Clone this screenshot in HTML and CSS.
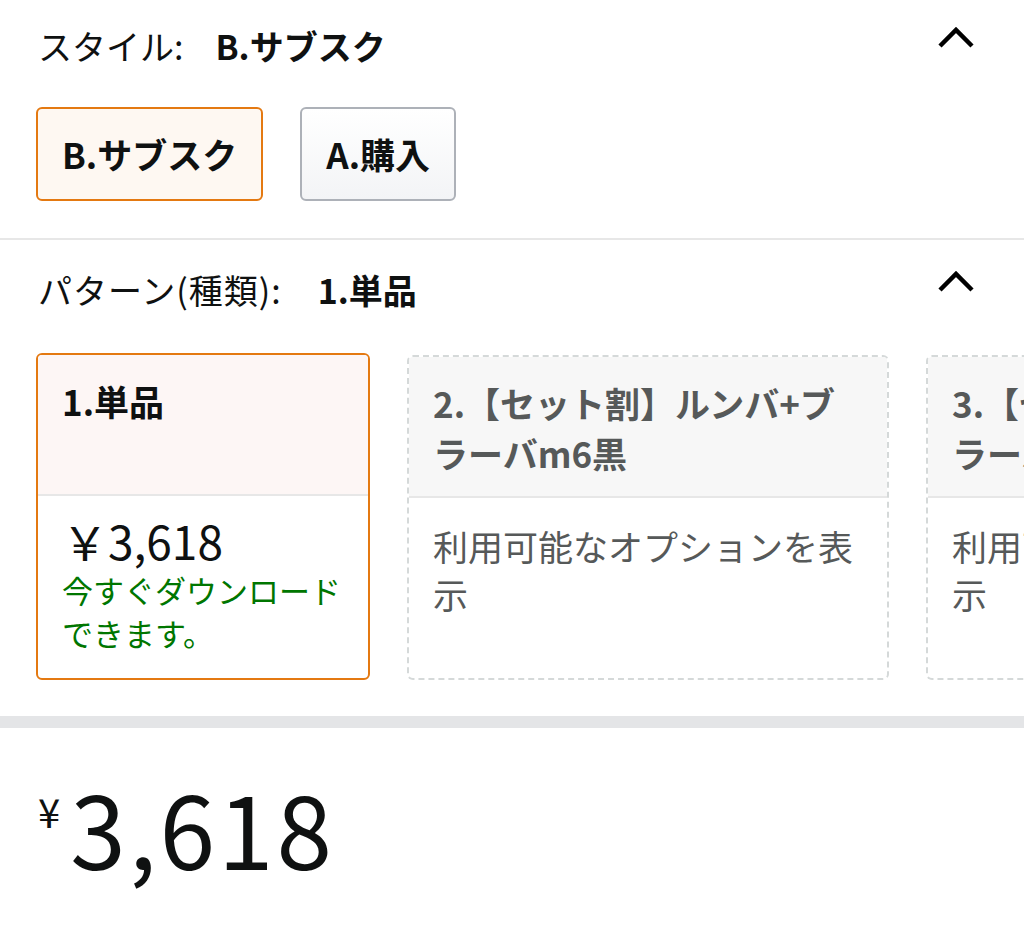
FILE: index.html
```html
<!DOCTYPE html>
<html lang="ja">
<head>
<meta charset="utf-8">
<link rel="stylesheet" href="styles.css">
</head>
<body>
<div class="page">
  <section class="variation style-var">
    <div class="var-head">
      <div class="var-title"><span class="label">スタイル:</span><span class="value">B.サブスク</span></div>
      <svg class="chevron" width="36" height="24" viewBox="0 0 36 24"><polyline points="2,20 18,4 34,20" fill="none" stroke="#000" stroke-width="4.5" stroke-linecap="butt" stroke-linejoin="miter"/></svg>
    </div>
    <div class="options">
      <div class="opt-btn selected">B.サブスク</div>
      <div class="opt-btn">A.購入</div>
    </div>
  </section>
  <div class="divider"></div>
  <section class="variation pattern-var">
    <div class="var-head">
      <div class="var-title"><span class="label">パターン(種類):</span><span class="value">1.単品</span></div>
      <svg class="chevron" width="36" height="24" viewBox="0 0 36 24"><polyline points="2,20 18,4 34,20" fill="none" stroke="#000" stroke-width="4.5" stroke-linecap="butt" stroke-linejoin="miter"/></svg>
    </div>
    <div class="cards">
      <div class="card selected card-narrow">
        <div class="card-head">1.単品</div>
        <div class="card-body">
          <div class="card-price">￥3,618</div>
          <div class="card-avail">今すぐダウンロードできます。</div>
        </div>
      </div>
      <div class="card unavailable card-wide">
        <div class="card-head">2.【セット割】ルンバ+ブラーバm6黒</div>
        <div class="card-body">
          <div class="card-note">利用可能なオプションを表示</div>
        </div>
      </div>
      <div class="card unavailable card-wide">
        <div class="card-head">3.【セット割】ルンバ+ブラーバm6白</div>
        <div class="card-body">
          <div class="card-note">利用可能なオプションを表示</div>
        </div>
      </div>
    </div>
  </section>
  <div class="band"></div>
  <section class="price-block">
    <span class="price-symbol">¥</span><span class="price-whole">3,618</span>
  </section>
</div>
</body>
</html>
```

FILE: styles.css
```css
* { box-sizing: border-box; }
html, body {
  margin: 0;
  padding: 0;
  background: #fff;
}
body {
  font-family: "Noto Sans CJK JP", "Noto Sans", sans-serif;
  color: #0f1111;
  overflow: hidden;
  width: 1024px;
  height: 934px;
}
.page {
  width: 1024px;
  overflow: hidden;
}
.variation {
  padding-left: 36px;
}
.style-var {
  padding-top: 24px;
  padding-bottom: 37px;
}
.pattern-var {
  padding-top: 28px;
  padding-bottom: 36px;
}
.var-head {
  display: flex;
  align-items: center;
  justify-content: space-between;
  padding-right: 50px;
  padding-left: 2px;
}
.var-title {
  font-size: 34px;
  line-height: 44px;
  white-space: nowrap;
}
.var-title .label {
  font-weight: 400;
  margin-right: 32px;
}
.var-title .value {
  font-weight: 700;
}
.pattern-var .var-title .label {
  letter-spacing: 1px;
  margin-right: 36px;
}
.chevron {
  display: block;
  margin-top: -16px;
}
.options {
  display: flex;
  gap: 37px;
  margin-top: 39px;
}
.opt-btn {
  font-size: 35px;
  font-weight: 700;
  line-height: 44px;
  padding: 23px 24px;
  border: 2px solid #adb1b8;
  border-radius: 6px;
  background: linear-gradient(#ffffff, #f3f4f6);
  white-space: nowrap;
}
.opt-btn.selected {
  border-color: #e47911;
  background: #fef8f2;
}
.divider {
  height: 2px;
  background: #e7e7e7;
}
.cards {
  display: flex;
  gap: 37px;
  margin-top: 41px;
  align-items: stretch;
}
.card {
  flex: 0 0 auto;
  display: flex;
  flex-direction: column;
  border-radius: 6px;
  overflow: hidden;
}
.card-narrow { width: 334px; }
.card-wide { width: 482px; }
.card.selected {
  border: 2px solid #e47911;
}
.card.unavailable {
  border: 2px dashed #d5d9d9;
  color: #565959;
  margin-top: 2px;
}
.card-head {
  font-size: 35px;
  font-weight: 700;
  line-height: 50px;
  padding: 21px 24px 16px;
  min-height: 141px;
  border-bottom: 2px solid #e7e7e7;
}
.card.selected .card-head {
  background: #fdf6f5;
}
.card.unavailable .card-head {
  background: #f7f7f7;
}
.card-body {
  flex: 1;
  padding: 16px 24px 24px;
}
.card-price {
  font-size: 46px;
  line-height: 56px;
  color: #0f1111;
}
.card-avail {
  font-size: 31px;
  line-height: 43px;
  color: #007600;
}
.card-note {
  font-size: 35px;
  line-height: 48px;
  padding-top: 8px;
}
.band {
  height: 12px;
  background: #e4e5e7;
}
.price-block {
  padding: 34px 0 0 38px;
  display: flex;
  align-items: flex-start;
}
.price-symbol {
  font-size: 40px;
  line-height: 46px;
  margin-top: 26px;
  margin-right: 10px;
}
.price-whole {
  font-size: 100px;
  line-height: 130px;
  letter-spacing: 3px;
}
```
